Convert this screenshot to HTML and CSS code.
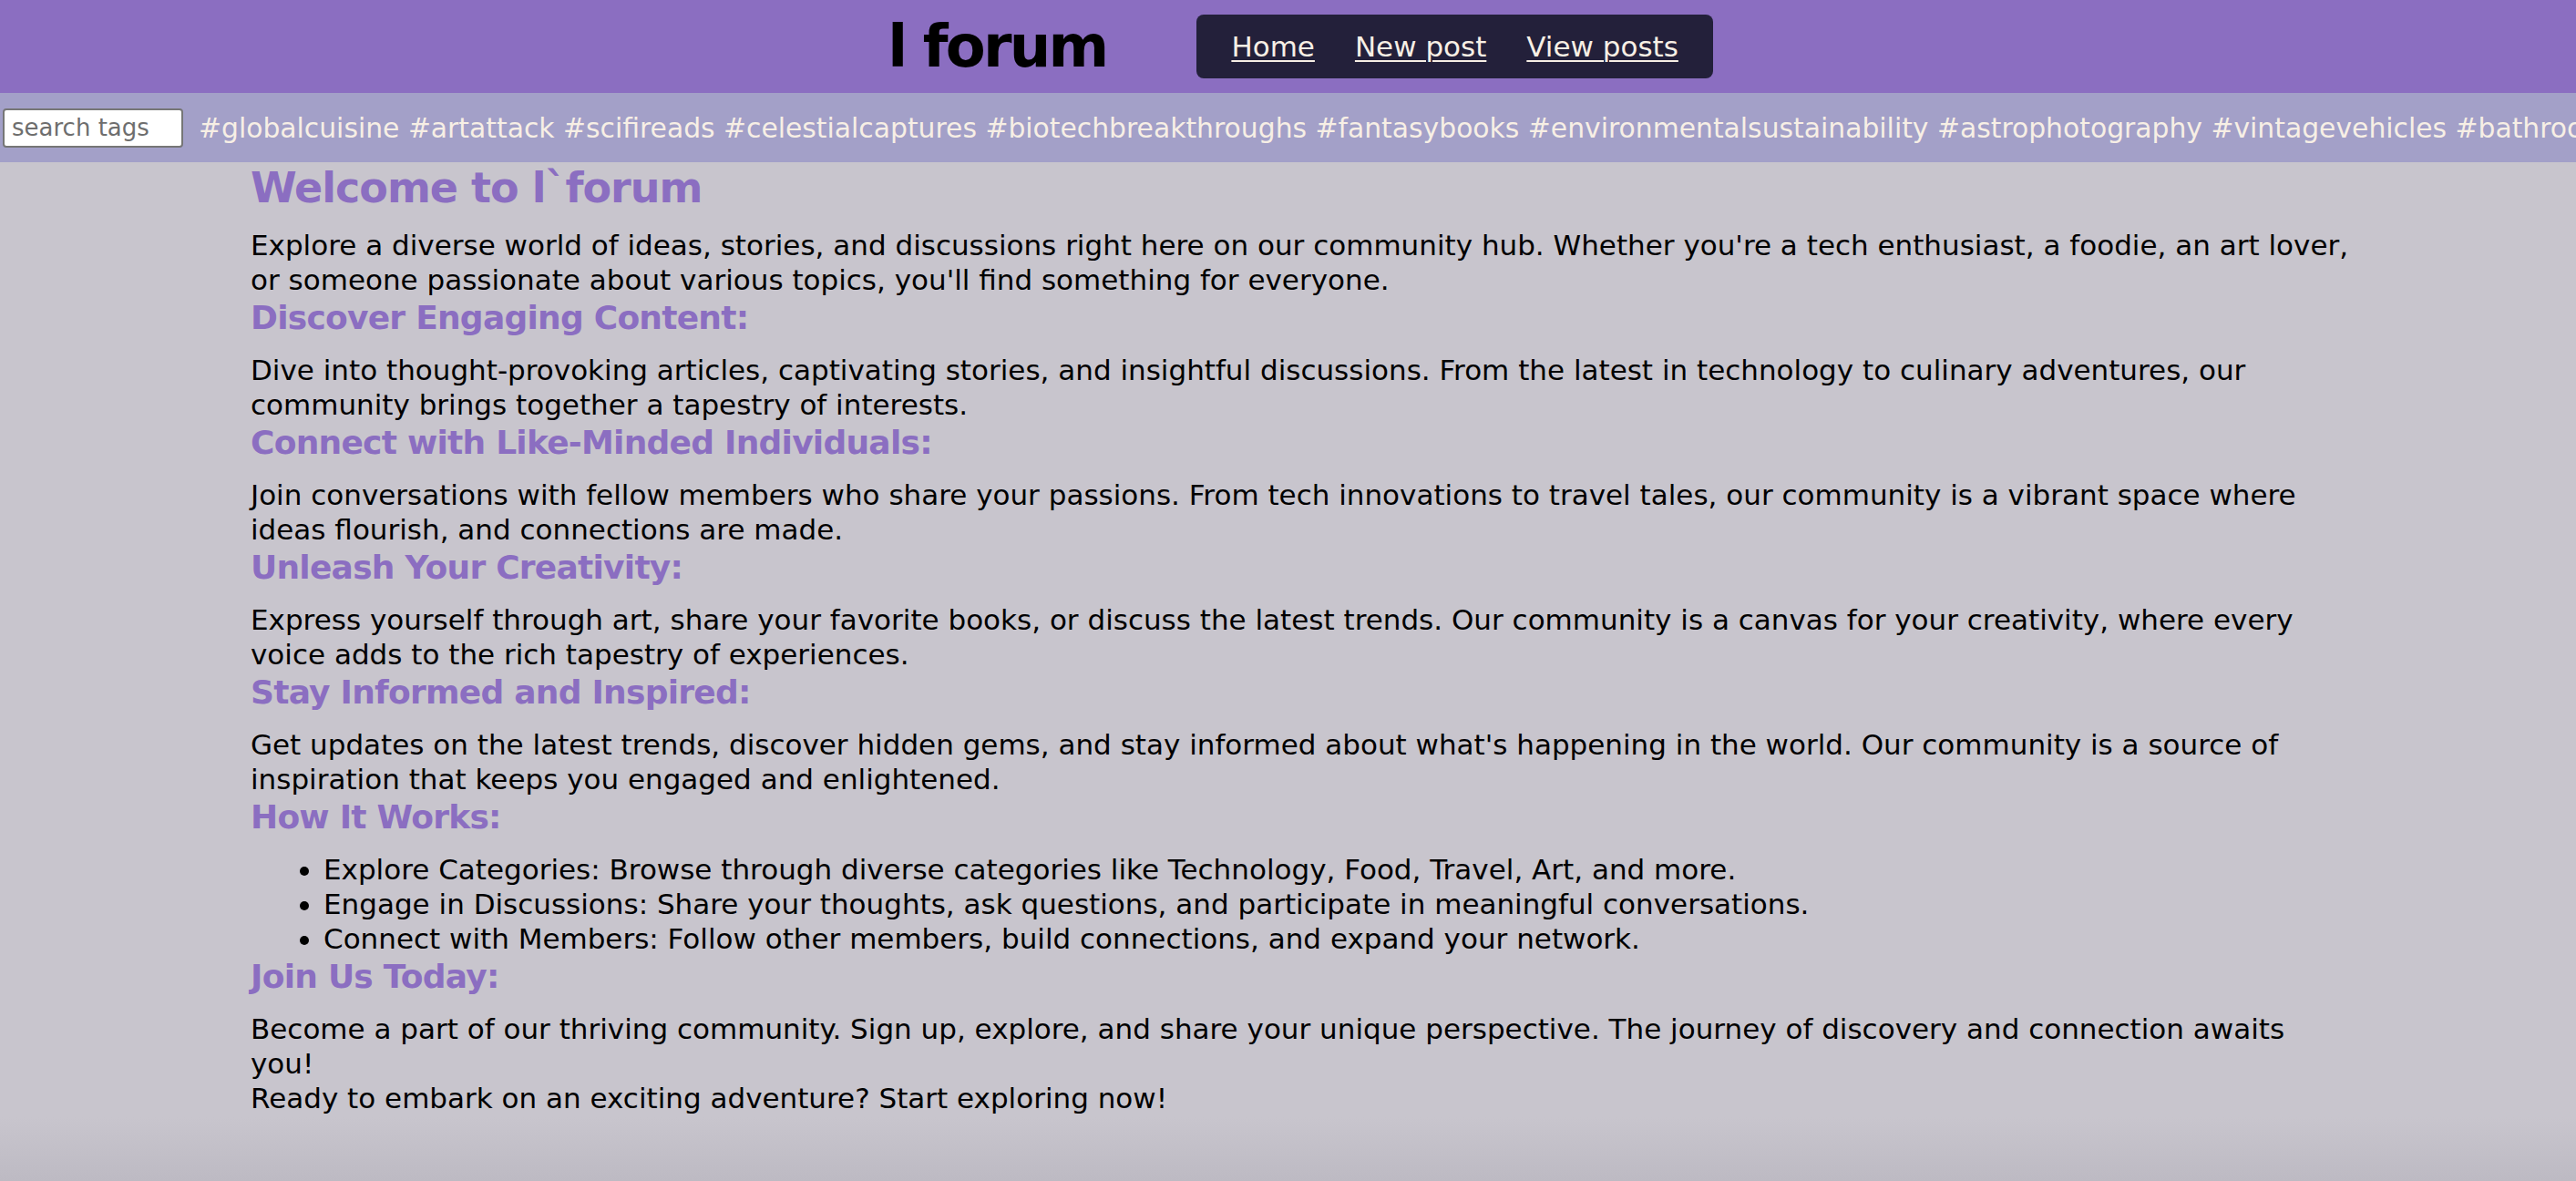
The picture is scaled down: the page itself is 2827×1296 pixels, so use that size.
FILE: index.html
```html
<!DOCTYPE html>
<html lang="en">
<head>
<meta charset="utf-8">
<title>l forum</title>
<link rel="stylesheet" href="styles.css">
</head>
<body>
<header class="topbar">
  <h1 class="brand">l forum</h1>
  <nav class="nav">
    <a href="#" class="nav-link">Home</a>
    <a href="#" class="nav-link">New post</a>
    <a href="#" class="nav-link">View posts</a>
  </nav>
</header>
<div class="tagbar">
  <input class="tag-search" type="text" placeholder="search tags">
  <div class="tags">#globalcuisine #artattack #scifireads #celestialcaptures #biotechbreakthroughs #fantasybooks #environmentalsustainability #astrophotography #vintagevehicles #bathroomdesign</div>
</div>
<main class="content">
  <h2 class="title">Welcome to l`forum</h2>
  <p class="text">Explore a diverse world of ideas, stories, and discussions right here on our community hub. Whether you're a tech enthusiast, a foodie, an art lover, or someone passionate about various topics, you'll find something for everyone.</p>
  <h3 class="section">Discover Engaging Content:</h3>
  <p class="text">Dive into thought-provoking articles, captivating stories, and insightful discussions. From the latest in technology to culinary adventures, our community brings together a tapestry of interests.</p>
  <h3 class="section">Connect with Like-Minded Individuals:</h3>
  <p class="text">Join conversations with fellow members who share your passions. From tech innovations to travel tales, our community is a vibrant space where ideas flourish, and connections are made.</p>
  <h3 class="section">Unleash Your Creativity:</h3>
  <p class="text">Express yourself through art, share your favorite books, or discuss the latest trends. Our community is a canvas for your creativity, where every voice adds to the rich tapestry of experiences.</p>
  <h3 class="section">Stay Informed and Inspired:</h3>
  <p class="text">Get updates on the latest trends, discover hidden gems, and stay informed about what's happening in the world. Our community is a source of inspiration that keeps you engaged and enlightened.</p>
  <h3 class="section">How It Works:</h3>
  <ul class="steps">
    <li>Explore Categories: Browse through diverse categories like Technology, Food, Travel, Art, and more.</li>
    <li>Engage in Discussions: Share your thoughts, ask questions, and participate in meaningful conversations.</li>
    <li>Connect with Members: Follow other members, build connections, and expand your network.</li>
  </ul>
  <h3 class="section">Join Us Today:</h3>
  <p class="text">Become a part of our thriving community. Sign up, explore, and share your unique perspective. The journey of discovery and connection awaits you!</p>
  <p class="text">Ready to embark on an exciting adventure? Start exploring now!</p>
</main>
</body>
</html>
```

FILE: styles.css
```css
html {
  min-height: 100%;
  background: linear-gradient(to bottom, #c8c5cd 0, #c8c5cd calc(100% - 70px), #bdbac3 100%);
}
body {
  margin: 0;
  font-family: "DejaVu Sans", "Liberation Sans", sans-serif;
  color: #000;
}
.topbar {
  height: 102px;
  background: #8b6ec1;
  display: flex;
  align-items: center;
  justify-content: center;
  gap: 99px;
  padding-left: 27px;
}
.brand {
  margin: 0;
  font-size: 64px;
  letter-spacing: -2.8px;
  font-weight: bold;
  line-height: 1;
  color: #000;
}
.nav {
  background: #23203a;
  height: 70px;
  border-radius: 8px;
  padding: 0 38px;
  display: flex;
  align-items: center;
  gap: 44px;
}
.nav-link {
  color: #f7efe5;
  font-size: 31px;
  text-decoration: underline;
  text-decoration-thickness: 2px;
  text-underline-offset: 4px;
}
.tagbar {
  height: 76px;
  background: #a3a0c8;
  display: flex;
  align-items: center;
  overflow: hidden;
}
.tag-search {
  flex: none;
  margin: 0 0 0 3px;
  width: 198px;
  height: 43px;
  box-sizing: border-box;
  border: 2px solid #767676;
  border-radius: 4px;
  background: #fff;
  padding: 0 8px;
  font-family: "DejaVu Sans", sans-serif;
  font-size: 26px;
  color: #333;
}
.tag-search::placeholder {
  color: #6e6e6e;
}
.tags {
  flex: 1;
  min-width: 0;
  margin-left: 17px;
  font-size: 29.8px;
  color: #f7efe5;
  white-space: nowrap;
  overflow: hidden;
}
.content {
  padding: 0 247px 40px 275px;
}
.title {
  margin: 0 0 15px;
  font-size: 46px;
  letter-spacing: -1px;
  line-height: 57px;
  font-weight: bold;
  color: #8b6ec1;
}
.section {
  margin: 0 0 15px;
  font-size: 36px;
  letter-spacing: -0.75px;
  line-height: 46px;
  font-weight: bold;
  color: #8b6ec1;
}
.text {
  margin: 0;
  font-size: 31px;
  line-height: 38px;
}
.steps {
  margin: 0;
  padding-left: 80px;
  font-size: 31px;
  line-height: 38px;
}
```
